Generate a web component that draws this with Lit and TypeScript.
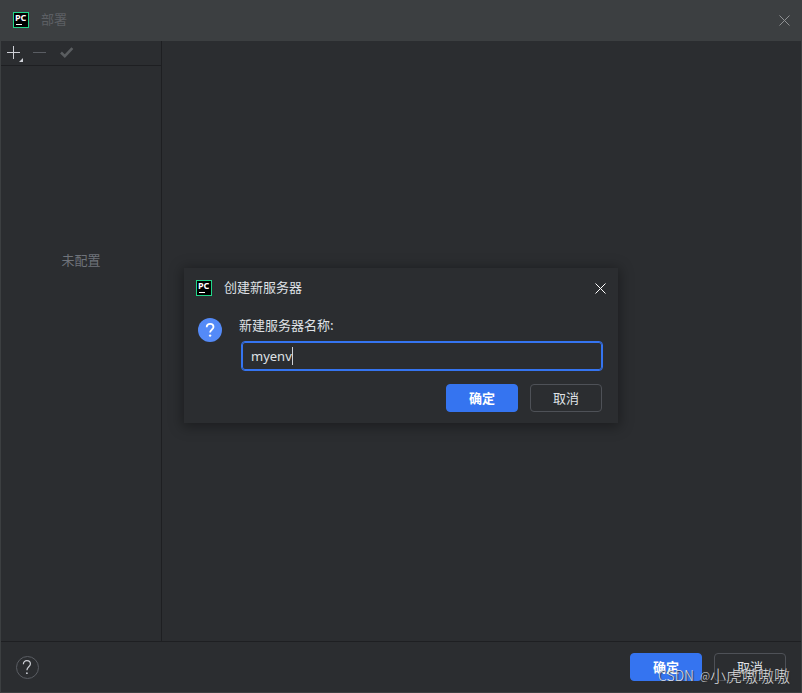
import { LitElement, html, css, svg } from "lit";
import { customElement, property, state } from "lit/decorators.js";

const controls = css`
  *,
  *::before {
    box-sizing: border-box;
  }
  button {
    font: inherit;
    color: inherit;
    padding: 0;
    margin: 0;
    border: 0;
    background: none;
  }
  svg {
    display: block;
  }
  .actions {
    display: flex;
    gap: 12px;
  }
  .btn {
    width: 72px;
    height: 28px;
    border: 1px solid #4e5157;
    border-radius: 4px;
    line-height: 20px;
    color: #dfe1e5;
  }
  .btn.primary {
    border-color: #3574f0;
    background: #3574f0;
    color: #ffffff;
    font-weight: 700;
  }
`;

@customElement("pc-logo")
export class PcLogo extends LitElement {
  static styles = css`
    :host {
      display: block;
      flex: none;
      width: 16px;
      height: 16px;
    }
    svg {
      display: block;
    }
    .letters {
      font: 700 9px "Noto Sans", sans-serif;
      fill: #ffffff;
    }
  `;

  render() {
    return html`<svg width="16" height="16" viewBox="0 0 16 16" aria-hidden="true">
      <rect x="0.5" y="0.5" width="15" height="15" fill="#000000" stroke="#21d789" />
      <text class="letters" x="2" y="9">PC</text>
      <rect x="3" y="12" width="6" height="1" fill="#ffffff" />
    </svg>`;
  }
}

@customElement("title-bar")
export class TitleBar extends LitElement {
  @property() heading = "";

  static styles = [
    controls,
    css`
      :host {
        display: flex;
        align-items: center;
        box-sizing: border-box;
        height: 40px;
        gap: 12px;
        padding: 0 12px;
        line-height: 20px;
      }
      .heading {
        flex: 1;
        margin: 0;
        padding-bottom: 2px;
        font-size: 13px;
        font-weight: 400;
      }
      .close {
        width: 11px;
        height: 11px;
        color: var(--close-color);
      }
    `,
  ];

  render() {
    return html`
      <pc-logo></pc-logo>
      <h1 class="heading">${this.heading}</h1>
      <button class="close" aria-label="关闭">
        <svg width="11" height="11" viewBox="0 0 11 11">
          <path d="M0.5 0.5L10.5 10.5M10.5 0.5L0.5 10.5" stroke="currentColor" fill="none" />
        </svg>
      </button>
    `;
  }
}

const plusIcon = svg`
  <path d="M6.5 0V13M0 6.5H13" stroke="#ced0d6" fill="none" />
  <path d="M16 12V16H12Z" fill="#ced0d6" />`;
const minusIcon = svg`<path d="M0 6.5H13" stroke="#5a5d63" fill="none" />`;
const checkIcon = svg`<path d="M2 6.5L5.8 10.2L13.4 2.2" stroke="#5a5d60" stroke-width="2.6" fill="none" />`;

@customElement("server-dialog")
export class ServerDialog extends LitElement {
  @state() private name = "myenv";

  static styles = [
    controls,
    css`
      :host {
        display: block;
        width: 434px;
        background: #2b2d30;
        color: #dfe1e5;
        box-shadow: 0 2px 12px 2px rgba(0, 0, 0, 0.35);
        --close-color: #ffffff;
      }
      .body {
        display: flex;
        gap: 16px;
        padding: 7px 16px 11px 14px;
      }
      .question {
        flex: none;
        width: 24px;
        height: 24px;
        margin-top: 3px;
      }
      .form {
        flex: 1;
        display: flex;
        flex-direction: column;
      }
      .label {
        line-height: 20px;
        margin: 0 0 7px 1px;
      }
      .field {
        position: relative;
        margin-left: 4px;
      }
      .input {
        display: block;
        width: 100%;
        height: 28px;
        padding: 0 8px;
        border: 1px solid #3574f0;
        border-radius: 3px;
        outline: 1px solid #3574f0;
        background: #2b2d30;
        color: #dfe1e5;
        font: 13px/20px "Noto Sans", "Noto Sans CJK SC", sans-serif;
      }
      .caret {
        position: absolute;
        left: 50px;
        top: 5px;
        width: 1px;
        height: 18px;
        background: #ced0d6;
      }
      .actions {
        justify-content: flex-end;
        margin-top: 14px;
      }
    `,
  ];

  render() {
    return html`
      <title-bar heading="创建新服务器"></title-bar>
      <div class="body">
        <svg class="question" viewBox="0 0 24 24" aria-hidden="true">
          <circle cx="12" cy="12" r="12" fill="#548af7" />
          <path
            d="M8.7 9.2C8.7 7.1 10.1 5.9 12.1 5.9C14.1 5.9 15.5 7.1 15.5 8.9C15.5 11.4 12.1 11.6 12.1 14.6"
            fill="none"
            stroke="#ffffff"
            stroke-width="1.8"
          />
          <circle cx="12.1" cy="17.6" r="1.2" fill="#ffffff" />
        </svg>
        <div class="form">
          <label class="label" for="name">新建服务器名称:</label>
          <div class="field">
            <input
              class="input"
              id="name"
              type="text"
              .value=${this.name}
              @input=${(e: Event) => (this.name = (e.target as HTMLInputElement).value)}
            />
            <span class="caret"></span>
          </div>
          <div class="actions">
            <button class="btn primary">确定</button>
            <button class="btn">取消</button>
          </div>
        </div>
      </div>
    `;
  }
}

@customElement("app-root")
export class AppRoot extends LitElement {
  static styles = [
    controls,
    css`
      :host {
        display: block;
        font: 13px/20px "Noto Sans CJK SC", "Noto Sans", sans-serif;
      }
      .window {
        position: relative;
        display: flex;
        flex-direction: column;
        min-height: 100vh;
        border: 1px solid #3c3f41;
        background: #2b2d30;
        color: #dfe1e5;
      }
      .top {
        padding: 0 11px 2px 12px;
        background: #3c3f41;
        color: #5c5f64;
        --close-color: #8f9193;
      }
      .main {
        flex: 1;
        display: flex;
      }
      .servers {
        display: flex;
        flex-direction: column;
        width: 161px;
        border-right: 1px solid #1e1f22;
      }
      .toolbar {
        display: flex;
        gap: 9px;
        height: 25px;
        padding: 5px 6px 0;
        border-bottom: 1px solid #1e1f22;
      }
      .tool {
        width: 17px;
        height: 17px;
      }
      .empty {
        flex: 1;
        margin: 0;
        padding-top: 184px;
        text-align: center;
        color: #6f737a;
      }
      .footer {
        display: flex;
        justify-content: space-between;
        align-items: center;
        height: 51px;
        padding: 0 15px;
        border-top: 1px solid #1e1f22;
      }
      .help {
        width: 23px;
        height: 23px;
      }
      .overlay {
        position: absolute;
        inset: 0;
        display: flex;
        align-items: center;
        justify-content: center;
        padding-bottom: 2px;
      }
      .watermark {
        position: absolute;
        right: 11px;
        bottom: 5px;
        display: flex;
        align-items: center;
        gap: 6px;
        font-size: 16px;
        font-weight: 300;
        line-height: 24px;
        color: #dcdddf;
        text-shadow: 1px 1px 1px #2b2d30;
        pointer-events: none;
      }
      .latin {
        font-size: 14px;
      }
      .at {
        font-size: 11px;
      }
      .user {
        display: flex;
        align-items: center;
      }
    `,
  ];

  private tool(label: string, icon: unknown, disabled = false) {
    return html`<button class="tool" aria-label=${label} ?disabled=${disabled}>
      <svg width="17" height="17" viewBox="0 0 17 17">${icon}</svg>
    </button>`;
  }

  render() {
    return html`
      <div class="window">
        <title-bar class="top" heading="部署"></title-bar>
        <main class="main">
          <section class="servers">
            <div class="toolbar">
              ${this.tool("添加", plusIcon)} ${this.tool("移除", minusIcon, true)}
              ${this.tool("设为默认", checkIcon, true)}
            </div>
            <p class="empty">未配置</p>
          </section>
        </main>
        <footer class="footer">
          <button class="help" aria-label="帮助">
            <svg width="23" height="23" viewBox="0 0 23 23">
              <circle cx="11.5" cy="11.5" r="11" fill="none" stroke="#5a5d63" />
              <path
                d="M7.4 8.2C7.4 5.9 8.8 4.7 10.9 4.7C13.1 4.7 14.4 6 14.4 7.9C14.4 10.7 10.9 10.8 10.9 14.3"
                fill="none"
                stroke="#ced0d6"
                stroke-width="1.2"
              />
              <circle cx="10.9" cy="17.2" r="0.9" fill="#ced0d6" />
            </svg>
          </button>
          <div class="actions">
            <button class="btn primary">确定</button>
            <button class="btn">取消</button>
          </div>
        </footer>
        <div class="overlay"><server-dialog role="dialog" aria-label="创建新服务器"></server-dialog></div>
        <div class="watermark">
          <span class="latin">CSDN</span>
          <span class="user"><span class="at">@</span>小虎嗷嗷嗷</span>
        </div>
      </div>
    `;
  }
}
